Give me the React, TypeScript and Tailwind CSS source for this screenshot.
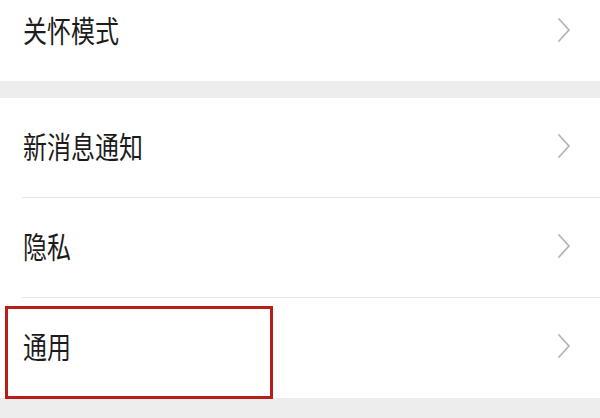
import React from 'react';

const Chevron: React.FC = () => (
  <svg width="14" height="26" viewBox="0 0 14 26" fill="none" className="shrink-0">
    <path d="M2 2 L12 13 L2 24" stroke="#b3b3b3" strokeWidth="1.8" strokeLinecap="round" strokeLinejoin="round" />
  </svg>
);

const Row: React.FC<{ label: string; divider?: boolean; className?: string }> = ({ label, divider, className }) => (
  <div className={`relative flex items-center justify-between pl-[23px] pr-[29px] ${className ?? ''}`}>
    <span className="inline-block text-[24px] text-[#1c1c1c] leading-none scale-y-[1.22] origin-center">{label}</span>
    <Chevron />
    {divider && <div className="absolute bottom-0 left-[22px] right-0 h-px bg-[#e6e6e6]" />}
  </div>
);

export default function App() {
  const items = [
    { label: '新消息通知', divider: true },
    { label: '隐私', divider: true },
    { label: '通用', divider: false },
  ];

  return (
    <div
      className="w-[600px] h-[418px] overflow-hidden bg-[#ededed]"
      style={{ fontFamily: '"Noto Sans CJK SC", "Noto Sans", sans-serif' }}
    >
      <div className="bg-white">
        <Row label="关怀模式" className="h-[81px] pb-[22px]" />
      </div>
      <div className="mt-[17px] bg-white relative">
        {items.map((item) => (
          <Row key={item.label} label={item.label} divider={item.divider} className="h-[100px] pb-[4px]" />
        ))}
        <div className="absolute left-[5px] top-[208px] w-[268px] h-[93px] border-[3px] border-[#b81d1a]" />
      </div>
    </div>
  );
}
